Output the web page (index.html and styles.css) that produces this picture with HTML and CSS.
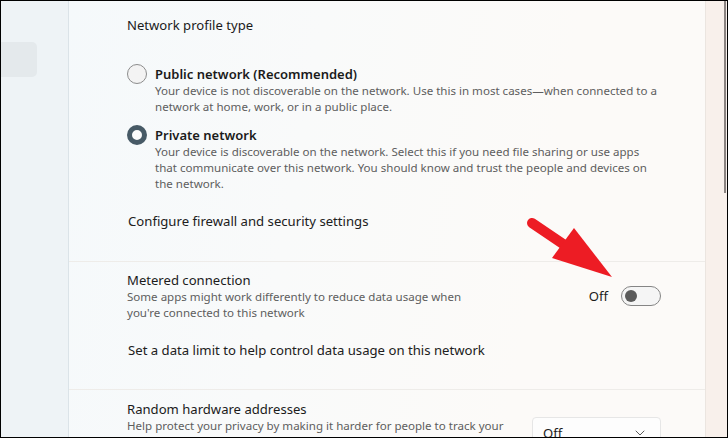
FILE: index.html
```html
<!DOCTYPE html>
<html lang="en">
<head>
<meta charset="utf-8">
<title>Network properties</title>
<link rel="stylesheet" href="styles.css">
</head>
<body>
<div class="frame">
  <aside class="sidebar">
    <div class="nav-item"></div>
  </aside>
  <main class="main">
    <div class="content">
      <section class="group group-profile">
        <div class="heading">Network profile type</div>
        <div class="radio-list">
          <div class="radio-row">
            <span class="radio"></span>
            <div class="radio-text">
              <div class="label strong">Public network (Recommended)</div>
              <div class="desc">Your device is not discoverable on the network. Use this in most cases—when connected to a<br>network at home, work, or in a public place.</div>
            </div>
          </div>
          <div class="radio-row">
            <span class="radio checked"></span>
            <div class="radio-text">
              <div class="label strong">Private network</div>
              <div class="desc">Your device is discoverable on the network. Select this if you need file sharing or use apps<br>that communicate over this network. You should know and trust the people and devices on<br>the network.</div>
            </div>
          </div>
        </div>
        <div class="link">Configure firewall and security settings</div>
      </section>

      <section class="group group-metered">
        <div class="setting">
          <div class="setting-text">
            <div class="label">Metered connection</div>
            <div class="desc">Some apps might work differently to reduce data usage when<br>you're connected to this network</div>
          </div>
          <div class="control">
            <span class="state">Off</span>
            <span class="toggle"><span class="knob"></span></span>
          </div>
        </div>
        <div class="link">Set a data limit to help control data usage on this network</div>
      </section>

      <section class="group group-random">
        <div class="setting setting-top">
          <div class="setting-text">
            <div class="label">Random hardware addresses</div>
            <div class="desc">Help protect your privacy by making it harder for people to track your<br>device location when you connect to this network.</div>
          </div>
          <div class="dropdown">
            <span class="dropdown-value">Off</span>
            <svg class="chevron" width="10" height="6" viewBox="0 0 10 6"><path d="M1 1 L5 5 L9 1" fill="none" stroke="#5a5a5a" stroke-width="1" stroke-linecap="round" stroke-linejoin="round"/></svg>
          </div>
        </div>
      </section>
    </div>
    <div class="gutter"><div class="scroll-thumb"></div></div>
  </main>

  <svg class="annotation" width="728" height="438" viewBox="0 0 728 438">
    <line x1="532" y1="223" x2="566" y2="246" stroke="#ed1c24" stroke-width="10" stroke-linecap="round"/>
    <polygon points="552,258 574,228 612,277" fill="#ed1c24"/>
  </svg>
</div>
</body>
</html>
```

FILE: styles.css
```css
* { box-sizing: border-box; }

html, body {
  margin: 0;
  padding: 0;
  background: #ffffff;
}

body {
  font-family: "Noto Sans", "Open Sans", sans-serif;
  color: #1b1b1b;
}

.frame {
  position: relative;
  width: 728px;
  height: 438px;
  border: 1px solid #000000;
  display: flex;
  overflow: hidden;
}

.sidebar {
  width: 68px;
  flex: none;
  background: #eef3f6;
  border-right: 1px solid #dbe3e8;
}

.nav-item {
  margin-top: 41px;
  width: 36px;
  height: 35px;
  background: #e4e9ec;
  border-radius: 0 5px 5px 0;
}

.main {
  flex: 1;
  display: flex;
  background: linear-gradient(100deg, #f5f9fb 0%, #f9fafa 35%, #fcfaf8 70%, #fcfaf8 100%);
}

.content {
  width: 637px;
  flex: none;
  border-right: 1px solid #ebe5e0;
}

.gutter {
  flex: 1;
  background: #f8f0eb;
  display: flex;
  justify-content: flex-end;
}

.scroll-thumb {
  width: 2px;
  height: 192px;
  background: #8b8482;
  margin-right: 1px;
}

.group {
  padding-left: 58px;
  padding-right: 44px;
}

.group + .group {
  border-top: 1px solid #eeece9;
}

.group-profile {
  padding-top: 14px;
  padding-bottom: 30px;
}

.group-metered {
  padding-top: 9px;
  padding-bottom: 29px;
}

.group-random {
  padding-top: 10px;
}

.heading,
.link {
  font-size: 13.1px;
  line-height: 20px;
  color: #1b1b1b;
}

.link {
  margin-top: 19px;
  padding-left: 1px;
  font-size: 13.15px;
  color: #202020;
}

.radio-list {
  margin-top: 30px;
}

.radio-row {
  display: flex;
  align-items: flex-start;
  gap: 8px;
}

.radio-row + .radio-row {
  margin-top: 11px;
}

.radio {
  width: 20px;
  height: 20px;
  flex: none;
  margin-top: -1px;
  border-radius: 50%;
  border: 1px solid #8c8c8c;
  background: #f3f3f3;
}

.radio.checked {
  border: 5px solid #475a66;
  background: #fbfbfb;
}

.label {
  font-size: 13.1px;
  line-height: 18px;
  color: #1b1b1b;
}

.label.strong {
  font-size: 13px;
  font-weight: 600;
}

.desc {
  font-size: 11.55px;
  line-height: 16px;
  color: #5e5e5e;
}

.setting {
  display: flex;
  align-items: center;
  justify-content: space-between;
}

.setting-top {
  align-items: flex-start;
}

.control {
  display: flex;
  align-items: center;
  gap: 13px;
}

.state {
  font-size: 13.1px;
  line-height: 20px;
  color: #1b1b1b;
}

.toggle {
  width: 40px;
  height: 20px;
  border-radius: 10px;
  border: 1px solid #858585;
  background: #f5f5f5;
  display: flex;
  align-items: center;
  padding-left: 3px;
}

.knob {
  width: 12px;
  height: 12px;
  border-radius: 50%;
  background: #5b5b5b;
}

.dropdown {
  margin-top: 17px;
  width: 129px;
  height: 32px;
  border: 1px solid #e6e6e6;
  border-radius: 4px;
  background: #fdfdfd;
  display: flex;
  align-items: center;
  justify-content: space-between;
  padding: 0 15px 0 10px;
}

.dropdown-value {
  font-size: 13.1px;
  line-height: 20px;
  color: #1b1b1b;
}

.chevron {
  display: block;
}

.annotation {
  position: absolute;
  left: -1px;
  top: -1px;
  pointer-events: none;
}
```
